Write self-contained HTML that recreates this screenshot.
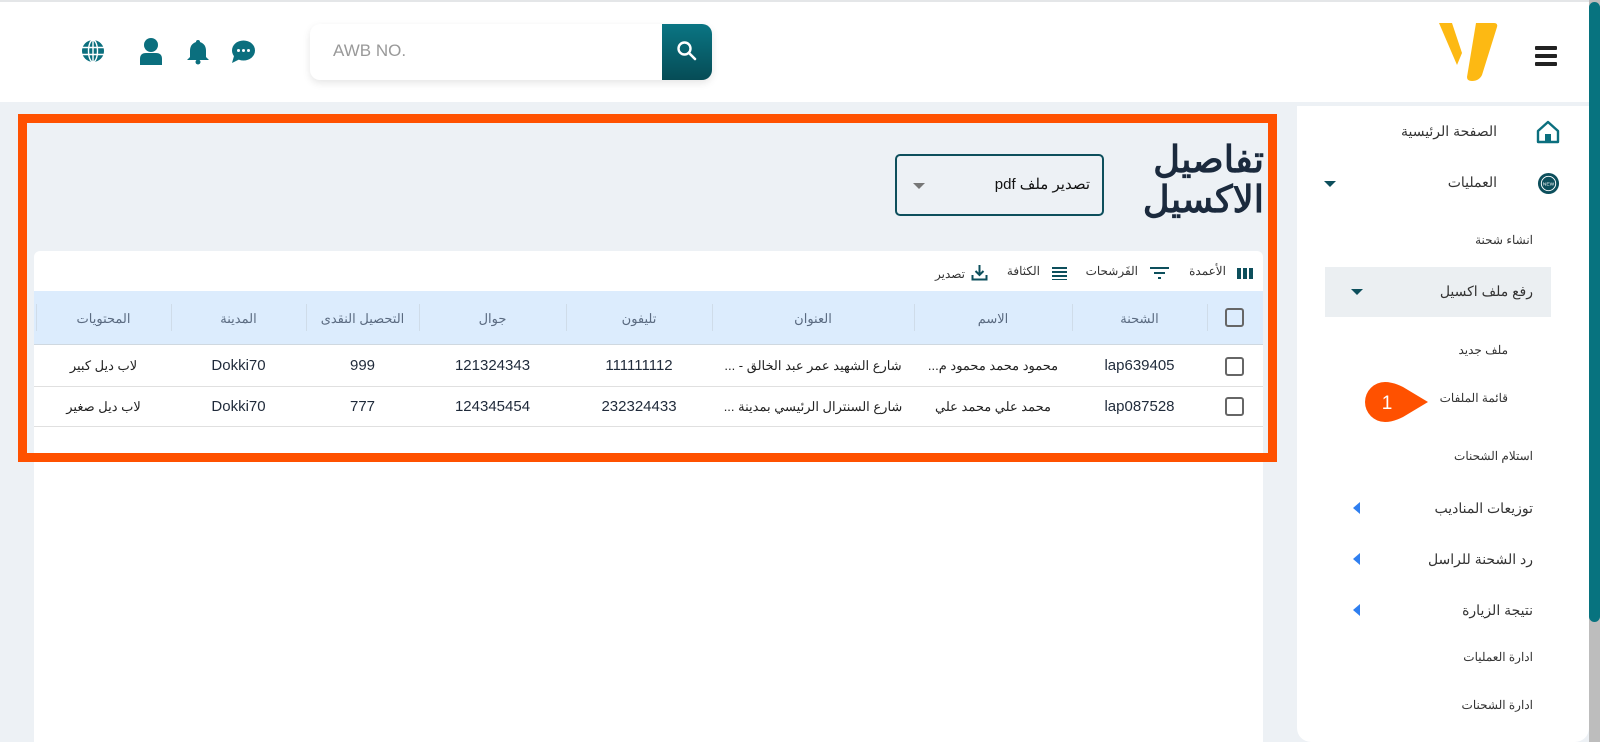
<!DOCTYPE html>
<html><head><meta charset="utf-8"><style>
*{margin:0;padding:0;box-sizing:border-box}
body{width:1600px;height:742px;overflow:hidden;background:#edf1f5;font-family:"Liberation Sans","Noto Sans CJK SC",sans-serif;position:relative}
.a{position:absolute}
.hdr{left:0;top:0;width:1600px;height:102px;background:#fff;border-top:2px solid #e4e6e8}
.t{white-space:nowrap;direction:rtl}
.side{left:1297px;top:106px;width:292px;height:636px;background:#fff;border-radius:0 0 14px 14px}
.si{font-size:13px;color:#333;text-align:right}
.th{font-size:13px;color:#5a6a80;text-align:center;direction:rtl}
.td{font-size:14px;color:#222;text-align:center;direction:rtl}
.num{font-size:15px;color:#1f2a3a}
.sep{width:1px;height:27px;background:#cfdce9;top:304px}
.cb{width:19px;height:19px;border:2px solid #666;border-radius:3px}
.lc{width:0;height:0;border-top:6px solid transparent;border-bottom:6px solid transparent;border-right:7px solid #2f7ff0}
.dc{width:0;height:0;border-left:6px solid transparent;border-right:6px solid transparent;border-top:6px solid #0d4f5c}
</style></head><body>
<div class="a hdr"></div>
<svg class="a" style="left:80px;top:38px" width="26" height="26" viewBox="0 0 26 26"><circle cx="13" cy="13" r="11" fill="#0b6f7e"/><g stroke="#fff" stroke-width="1.4" fill="none"><ellipse cx="13" cy="13" rx="4.5" ry="11"/><line x1="13" y1="2" x2="13" y2="24"/><line x1="2" y1="9.5" x2="24" y2="9.5"/><line x1="2" y1="16.5" x2="24" y2="16.5"/></g></svg>
<svg class="a" style="left:138px;top:37px" width="26" height="28" viewBox="0 0 26 28"><circle cx="13" cy="8" r="7" fill="#0b6f7e"/><path d="M2 28V22q0-6 6-6h10q6 0 6 6v6z" fill="#0b6f7e"/></svg>
<svg class="a" style="left:187px;top:39px" width="22" height="26" viewBox="0 0 22 26"><path d="M11 1q2 0 2 2q6 2 6 9v6l3 3H0l3-3v-6q0-7 6-9q0-2 2-2z" fill="#0b6f7e"/><circle cx="11" cy="23" r="2.5" fill="#0b6f7e"/></svg>
<svg class="a" style="left:230px;top:40px" width="26" height="24" viewBox="0 0 26 24"><ellipse cx="13.5" cy="10.5" rx="11.5" ry="10" fill="#0b6f7e"/><path d="M4 16L2 23l8-4z" fill="#0b6f7e"/><circle cx="8.5" cy="10.5" r="1.5" fill="#fff"/><circle cx="13.5" cy="10.5" r="1.5" fill="#fff"/><circle cx="18.5" cy="10.5" r="1.5" fill="#fff"/></svg>
<div class="a" style="left:310px;top:24px;width:402px;height:56px;background:#fff;border-radius:10px;box-shadow:0 3px 8px rgba(0,0,0,.1)"></div>
<div class="a" style="left:333px;top:41px;font-size:17px;color:#999">AWB NO.</div>
<div class="a" style="left:662px;top:24px;width:50px;height:56px;border-radius:0 10px 10px 0;background:linear-gradient(#0a7583,#064c56)"></div>
<svg class="a" style="left:675px;top:39px" width="24" height="24" viewBox="0 0 24 24"><circle cx="9.5" cy="9.5" r="6" stroke="#fff" stroke-width="2.4" fill="none"/><line x1="14" y1="14" x2="20" y2="20" stroke="#fff" stroke-width="2.6" stroke-linecap="round"/></svg>
<svg class="a" style="left:1438px;top:20px" width="60" height="62" viewBox="0 0 60 62"><path d="M1 3h13l10 30-5 12z" fill="#fdb913"/><path d="M38 3h18q4 0 3 4L44 55q-3 6-10 6q-5 0-5-4z" fill="#fdb913"/></svg>
<div class="a" style="left:1535px;top:46px;width:22px;height:4px;background:#222;border-radius:1px"></div>
<div class="a" style="left:1535px;top:54px;width:22px;height:4px;background:#222;border-radius:1px"></div>
<div class="a" style="left:1535px;top:62px;width:22px;height:4px;background:#222;border-radius:1px"></div>
<div class="a" style="left:1589px;top:0;width:11px;height:742px;background:#bdbdbd"></div>
<div class="a" style="left:1589px;top:2px;width:11px;height:620px;background:#07737f;border-radius:6px"></div>
<div class="a side"></div>
<svg class="a" style="left:1536px;top:120px" width="24" height="24" viewBox="0 0 24 24"><path d="M2 11L12 2l10 9v11H2z" fill="none" stroke="#0b6f7e" stroke-width="2.4" stroke-linejoin="round"/><rect x="9" y="14" width="6" height="8" fill="#0b6f7e"/></svg>
<div class="a t si" style="right:103px;top:123px;font-size:14px">الصفحة الرئيسية</div>
<svg class="a" style="left:1537px;top:172px" width="23" height="23" viewBox="0 0 24 24"><circle cx="12" cy="12" r="11" fill="#0d4f5c"/><circle cx="12" cy="12" r="7.5" fill="none" stroke="#fff" stroke-width="1"/><text x="12" y="14" font-size="5" fill="#fff" text-anchor="middle" font-family="Liberation Sans">NEW</text></svg>
<div class="a t si" style="right:103px;top:174px;font-size:14px">العمليات</div>
<div class="a dc" style="left:1324px;top:181px"></div>
<div class="a t si" style="right:67px;top:233px;font-size:12px">انشاء شحنة</div>
<div class="a" style="left:1325px;top:267px;width:226px;height:50px;background:#ebeff2"></div>
<div class="a t si" style="right:67px;top:283px;font-size:14px">رفع ملف اكسيل</div>
<div class="a dc" style="left:1351px;top:289px"></div>
<div class="a t si" style="right:92px;top:343px;font-size:12px">ملف جديد</div>
<div class="a t si" style="right:92px;top:391px;font-size:12px">قائمة الملفات</div>
<svg class="a" style="left:1365px;top:381px" width="64" height="42" viewBox="0 0 64 42"><path d="M20 1q8 0 18 5l25 15-25 15q-10 5-18 5A20 20 0 0 1 20 1z" fill="#ff5100"/><text x="22" y="28" font-size="19" fill="#fff" text-anchor="middle" font-family="Liberation Sans">1</text></svg>
<div class="a t si" style="right:67px;top:449px;font-size:12px">استلام الشحنات</div>
<div class="a t si" style="right:67px;top:500px;font-size:14px">توزيعات المناديب</div><div class="a lc" style="left:1353px;top:502px"></div>
<div class="a t si" style="right:67px;top:551px;font-size:14px">رد الشحنة للراسل</div><div class="a lc" style="left:1353px;top:553px"></div>
<div class="a t si" style="right:67px;top:602px;font-size:14px">نتيجة الزيارة</div><div class="a lc" style="left:1353px;top:604px"></div>
<div class="a t si" style="right:67px;top:650px;font-size:12px">ادارة العمليات</div>
<div class="a t si" style="right:67px;top:698px;font-size:12px">ادارة الشحنات</div>
<div class="a t" style="right:336px;top:140px;font-size:37px;font-weight:bold;color:#1b2a3d;line-height:40px;text-align:right">تفاصيل<br>الاكسيل</div>
<div class="a" style="left:895px;top:154px;width:209px;height:62px;border:2px solid #0d4f5c;border-radius:5px;background:#edf1f5"></div>
<div class="a t" style="right:510px;top:175px;font-size:15px;color:#111">تصدير ملف pdf</div>
<div class="a" style="left:913px;top:183px;border-left:6px solid transparent;border-right:6px solid transparent;border-top:6px solid #777"></div>
<div class="a" style="left:34px;top:251px;width:1229px;height:491px;background:#fff;border-radius:6px 6px 0 0"></div>
<div class="a" style="left:1237px;top:268px;width:4px;height:11px;background:#0d4f5c"></div>
<div class="a" style="left:1243px;top:268px;width:4px;height:11px;background:#0d4f5c"></div>
<div class="a" style="left:1249px;top:268px;width:4px;height:11px;background:#0d4f5c"></div>
<div class="a t" style="right:374px;top:264px;font-size:12px;color:#333">الأعمدة</div>
<svg class="a" style="left:1150px;top:266px" width="19" height="14" viewBox="0 0 19 14"><rect x="0" y="1" width="19" height="2" fill="#0d4f5c"/><rect x="4" y="6" width="11" height="2" fill="#0d4f5c"/><rect x="8" y="11" width="3" height="2" fill="#0d4f5c"/></svg>
<div class="a t" style="right:462px;top:264px;font-size:12px;color:#333">الفَرشحات</div>
<svg class="a" style="left:1052px;top:266px" width="15" height="14" viewBox="0 0 15 14"><rect y="1" width="15" height="2" fill="#0d4f5c"/><rect y="5" width="15" height="2" fill="#0d4f5c"/><rect y="9" width="15" height="2" fill="#0d4f5c"/><rect y="13" width="15" height="1.5" fill="#0d4f5c"/></svg>
<div class="a t" style="right:560px;top:264px;font-size:12px;color:#333">الكثافة</div>
<svg class="a" style="left:971px;top:264px" width="17" height="17" viewBox="0 0 17 17"><path d="M8.5 1v10M4.5 7l4 4 4-4M1.5 11v4.5h14V11" fill="none" stroke="#0d4f5c" stroke-width="2"/></svg>
<div class="a t" style="right:635px;top:267px;font-size:12px;color:#333">تصدير</div>
<div class="a" style="left:34px;top:291px;width:1229px;height:54px;background:#dcecfd;border-bottom:1px solid #cfd8e0"></div>
<div class="a" style="left:34px;top:386px;width:1229px;height:1px;background:#e0e0e0"></div>
<div class="a" style="left:34px;top:426px;width:1229px;height:1px;background:#e0e0e0"></div>
<div class="a sep" style="left:36px"></div><div class="a sep" style="left:171px"></div><div class="a sep" style="left:306px"></div><div class="a sep" style="left:419px"></div><div class="a sep" style="left:566px"></div><div class="a sep" style="left:712px"></div><div class="a sep" style="left:914px"></div><div class="a sep" style="left:1072px"></div><div class="a sep" style="left:1207px"></div>
<div class="a cb" style="left:1225px;top:308px"></div>
<div class="a cb" style="left:1225px;top:357px"></div>
<div class="a cb" style="left:1225px;top:397px"></div>
<div class="a th" style="left:1072px;width:135px;top:311px">الشحنة</div>
<div class="a th" style="left:914px;width:158px;top:311px">الاسم</div>
<div class="a th" style="left:712px;width:202px;top:311px">العنوان</div>
<div class="a th" style="left:566px;width:146px;top:311px">تليفون</div>
<div class="a th" style="left:419px;width:147px;top:311px">جوال</div>
<div class="a th" style="left:306px;width:113px;top:311px">التحصيل النقدى</div>
<div class="a th" style="left:171px;width:135px;top:311px">المدينة</div>
<div class="a th" style="left:36px;width:135px;top:311px">المحتويات</div>
<div class="a td num" style="left:1072px;width:135px;top:357px">lap639405</div>
<div class="a td" style="left:914px;width:158px;top:358px;font-size:13px">محمود محمد محمود م...</div>
<div class="a td" style="left:712px;width:202px;top:358px;font-size:13px">شارع الشهيد عمر عبد الخالق - ...</div>
<div class="a td num" style="left:566px;width:146px;top:357px">111111112</div>
<div class="a td num" style="left:419px;width:147px;top:357px">121324343</div>
<div class="a td num" style="left:306px;width:113px;top:357px">999</div>
<div class="a td num" style="left:171px;width:135px;top:357px">Dokki70</div>
<div class="a td" style="left:36px;width:135px;top:358px;font-size:13px">لاب ديل كبير</div>
<div class="a td num" style="left:1072px;width:135px;top:398px">lap087528</div>
<div class="a td" style="left:914px;width:158px;top:399px;font-size:13px">محمد علي محمد علي</div>
<div class="a td" style="left:712px;width:202px;top:399px;font-size:13px">شارع السنترال الرئيسي بمدينة ...</div>
<div class="a td num" style="left:566px;width:146px;top:398px">232324433</div>
<div class="a td num" style="left:419px;width:147px;top:398px">124345454</div>
<div class="a td num" style="left:306px;width:113px;top:398px">777</div>
<div class="a td num" style="left:171px;width:135px;top:398px">Dokki70</div>
<div class="a td" style="left:36px;width:135px;top:399px;font-size:13px">لاب ديل صغير</div>
<div class="a" style="left:18px;top:114px;width:1259px;height:348px;border:9px solid #ff5100"></div>
</body></html>
